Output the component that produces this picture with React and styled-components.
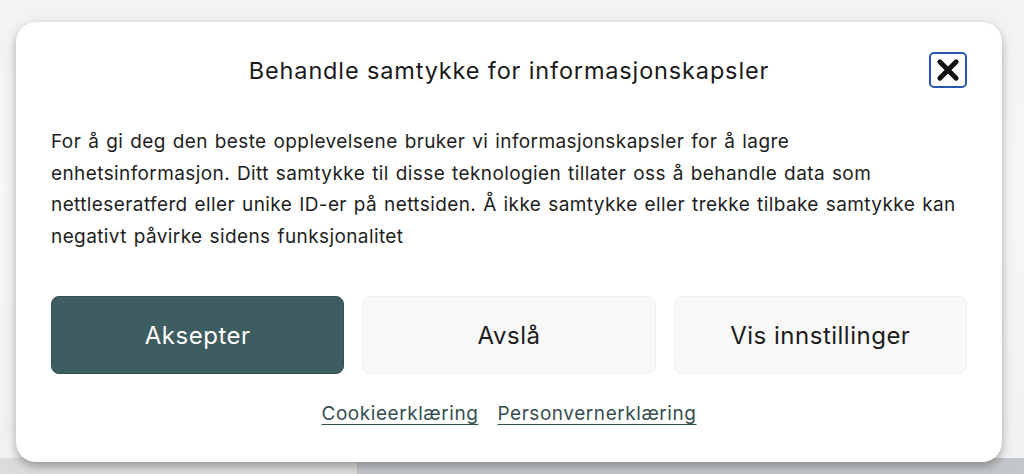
import React from "react";
import styled, { createGlobalStyle } from "styled-components";

const Global = createGlobalStyle`
  html, body { margin: 0; padding: 0; background: #f6f6f6; }
  body { font-family: "Inter", "Noto Sans", sans-serif; }
  * { box-sizing: border-box; }
`;

const Page = styled.div`
  width: 1024px;
  height: 474px;
  overflow: hidden;
  display: flex;
  flex-direction: column;
  background: linear-gradient(#f4f4f4, #f8f8f8 40%, #f2f2f2);
`;

const Stage = styled.div`
  padding: 22px 22px 0 16px;
  position: relative;
  z-index: 1;
`;

const Card = styled.div`
  width: 986px;
  height: 440px;
  background: #fff;
  border-radius: 20px;
  box-shadow: 0 4px 8px rgba(0, 0, 0, 0.28), 0 0 28px rgba(0, 0, 0, 0.06);
  padding: 30px 35px 0 35px;
  display: flex;
  flex-direction: column;
`;

const Header = styled.div`
  display: grid;
  grid-template-columns: 38px 1fr 38px;
  align-items: center;
  height: 36px;
`;

const Title = styled.h2`
  grid-column: 2;
  margin: 0;
  text-align: center;
  font-weight: 400;
  font-size: 23.5px;
  letter-spacing: 0.85px;
  color: #1a1a1a;
`;

const Close = styled.button`
  grid-column: 3;
  width: 38px;
  height: 36px;
  border: 2px solid #2b57b3;
  border-radius: 5px;
  background: #fff;
  padding: 0;
  display: flex;
  align-items: center;
  justify-content: center;
`;

const Body = styled.p`
  margin: 38px 0 0 0;
  font-size: 19px;
  line-height: 31.5px;
  letter-spacing: 0.4px;
  word-spacing: 1.2px;
  color: #1e1e1e;
  white-space: nowrap;
`;

const Buttons = styled.div`
  margin-top: 44px;
  display: grid;
  grid-template-columns: repeat(3, 1fr);
  gap: 18px;
`;

const Btn = styled.button`
  height: 78px;
  border-radius: 8px;
  font-family: inherit;
  font-size: 24px;
  letter-spacing: 0.5px;
  font-weight: 400;
  border: 1px solid ${(p) => (p.$primary ? "#34504f" : "#efefef")};
  background: ${(p) => (p.$primary ? "#3e5d60" : "#f8f8f8")};
  color: ${(p) => (p.$primary ? "#fff" : "#1c1c1c")};
`;

const Links = styled.div`
  margin-top: 28px;
  display: flex;
  justify-content: center;
  gap: 19px;
`;

const Link = styled.a`
  font-size: 19px;
  letter-spacing: 0.55px;
  color: #354e52;
  text-decoration: underline;
  text-underline-offset: 4px;
  text-decoration-thickness: 1px;
`;

const Band = styled.div`
  flex: 1;
  display: grid;
  grid-template-columns: 357px 1fr;
  margin-top: -4px;
`;

const BandPart = styled.div`
  background: ${(p) => p.$bg};
`;

const lines = [
  "For å gi deg den beste opplevelsene bruker vi informasjonskapsler for å lagre",
  "enhetsinformasjon. Ditt samtykke til disse teknologien tillater oss å behandle data som",
  "nettleseratferd eller unike ID-er på nettsiden. Å ikke samtykke eller trekke tilbake samtykke kan",
  "negativt påvirke sidens funksjonalitet",
];

export default function App() {
  return (
    <>
      <Global />
      <Page>
        <Stage>
          <Card>
            <Header>
              <Title>Behandle samtykke for informasjonskapsler</Title>
              <Close aria-label="Lukk">
                <svg width="28" height="28" viewBox="0 0 24 24">
                  <path
                    d="M5 5 L19 19 M19 5 L5 19"
                    stroke="#111"
                    strokeWidth="4.2"
                    strokeLinecap="round"
                  />
                </svg>
              </Close>
            </Header>
            <Body>
              {lines.map((l, i) => (
                <React.Fragment key={i}>
                  {l}
                  {i < lines.length - 1 && <br />}
                </React.Fragment>
              ))}
            </Body>
            <Buttons>
              <Btn $primary>Aksepter</Btn>
              <Btn>Avslå</Btn>
              <Btn>Vis innstillinger</Btn>
            </Buttons>
            <Links>
              <Link href="#">Cookieerklæring</Link>
              <Link href="#">Personvernerklæring</Link>
            </Links>
          </Card>
        </Stage>
        <Band>
          <BandPart $bg="#dcdcdc" />
          <BandPart $bg="#c4c7c9" />
        </Band>
      </Page>
    </>
  );
}
